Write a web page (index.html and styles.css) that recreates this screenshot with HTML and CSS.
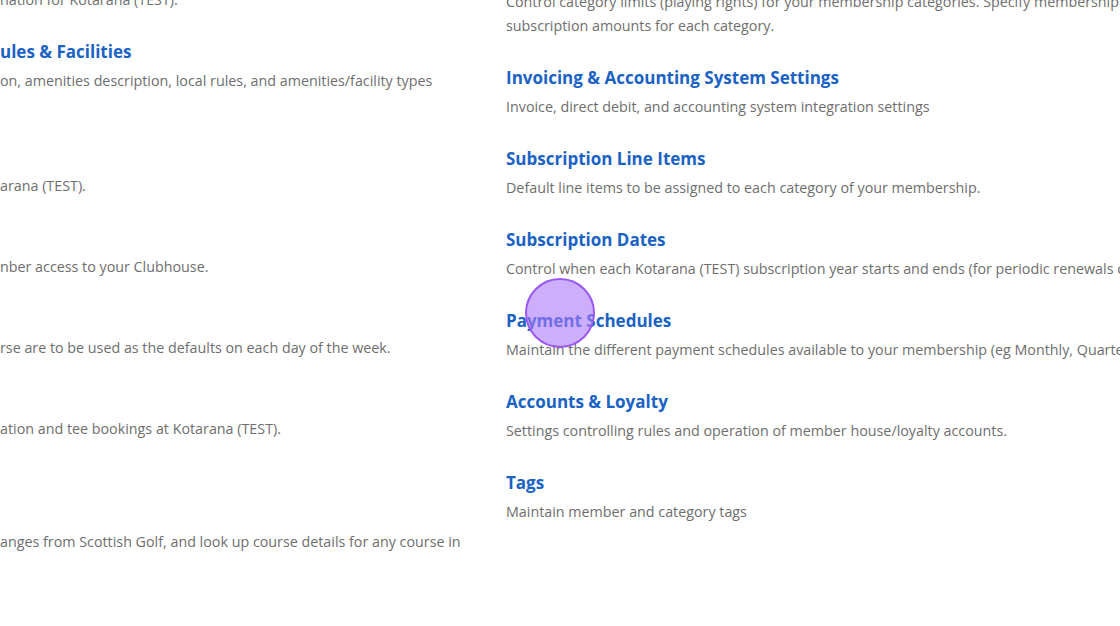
FILE: index.html
```html
<!DOCTYPE html>
<html lang="en">
<head>
  <meta charset="UTF-8" />
  <meta name="viewport" content="width=device-width, initial-scale=1.0"/>
  <title>Club Settings</title>
  <link rel="stylesheet" href="styles.css">
</head>
<body>
  <!-- Settings list, scrolled part way down -->
  <div class="settings">
    <div class="settings-col left-col">
      <div class="setting">
        <a href="#" class="setting-title">&nbsp;</a>
        <p class="setting-desc">nation for Kotarana (TEST).</p>
      </div>
      <div class="setting">
        <a href="#" class="setting-title">ules &amp; Facilities</a>
        <p class="setting-desc two-lines">on, amenities description, local rules, and amenities/facility types</p>
      </div>
      <div class="setting">
        <a href="#" class="setting-title">&nbsp;</a>
        <p class="setting-desc">arana (TEST).</p>
      </div>
      <div class="setting">
        <a href="#" class="setting-title">&nbsp;</a>
        <p class="setting-desc">nber access to your Clubhouse.</p>
      </div>
      <div class="setting">
        <a href="#" class="setting-title">&nbsp;</a>
        <p class="setting-desc">rse are to be used as the defaults on each day of the week.</p>
      </div>
      <div class="setting">
        <a href="#" class="setting-title">&nbsp;</a>
        <p class="setting-desc tall">ation and tee bookings at Kotarana (TEST).</p>
      </div>
      <div class="setting">
        <a href="#" class="setting-title">&nbsp;</a>
        <p class="setting-desc">anges from Scottish Golf, and look up course details for any course in</p>
      </div>
    </div>

    <div class="settings-col right-col">
      <div class="setting">
        <a href="#" class="setting-title">Categories &amp; Subscriptions</a>
        <p class="setting-desc">Control category limits (playing rights) for your membership categories. Specify membership and joining fees, and subscription amounts for each category.</p>
      </div>
      <div class="setting">
        <a href="#" class="setting-title">Invoicing &amp; Accounting System Settings</a>
        <p class="setting-desc">Invoice, direct debit, and accounting system integration settings</p>
      </div>
      <div class="setting">
        <a href="#" class="setting-title">Subscription Line Items</a>
        <p class="setting-desc">Default line items to be assigned to each category of your membership.</p>
      </div>
      <div class="setting">
        <a href="#" class="setting-title">Subscription Dates</a>
        <p class="setting-desc">Control when each Kotarana (TEST) subscription year starts and ends (for periodic renewals only).</p>
      </div>
      <div class="setting">
        <a href="#" class="setting-title">Payment Schedules</a>
        <p class="setting-desc">Maintain the different payment schedules available to your membership (eg Monthly, Quarterly, Annually).</p>
      </div>
      <div class="setting">
        <a href="#" class="setting-title">Accounts &amp; Loyalty</a>
        <p class="setting-desc">Settings controlling rules and operation of member house/loyalty accounts.</p>
      </div>
      <div class="setting">
        <a href="#" class="setting-title">Tags</a>
        <p class="setting-desc">Maintain member and category tags</p>
      </div>
    </div>
  </div>

  <!-- Click marker -->
  <span class="click-dot"></span>
</body>
</html>
```

FILE: styles.css
```css
body {
  font-family: 'Open Sans', 'Liberation Sans', sans-serif;
  background-color: #fff;
  margin: 0;
  padding: 0;
  overflow: hidden;
  height: 626px;
}

.settings {
  display: flex;
  gap: 36px;
  margin-top: -40px;
}

.settings-col {
  flex: none;
}

.left-col {
  width: 470px;
  margin-top: -2px;
}

.right-col {
  width: 800px;
}

.setting {
  margin-bottom: 27px;
}

.setting-title {
  display: block;
  font-size: 17px;
  font-weight: 700;
  line-height: 26px;
  color: #1a62c4;
  text-decoration: none;
  margin-bottom: 4px;
}

.setting-desc {
  margin: 0;
  font-size: 14.3px;
  line-height: 24px;
  color: #6e6e6e;
}

.setting-desc.two-lines {
  min-height: 48px;
}

.setting-desc.tall {
  min-height: 56px;
}

/* Click marker over the page */
.click-dot {
  position: absolute;
  left: 525px;
  top: 278px;
  width: 66px;
  height: 66px;
  border-radius: 50%;
  border: 2px solid #9b57f0;
  background-color: rgba(170, 120, 250, 0.6);
}
```
